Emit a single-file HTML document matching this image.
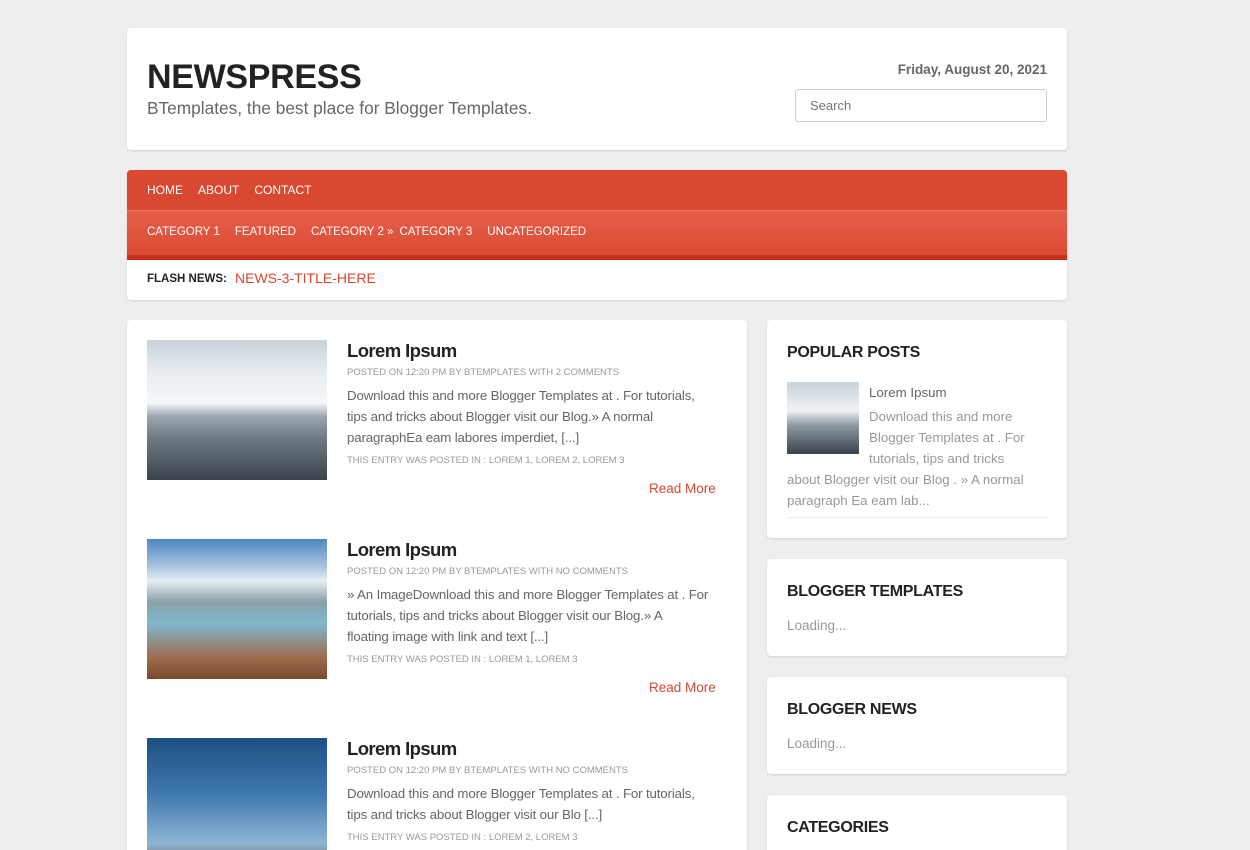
<!DOCTYPE html>
<html style="overflow:hidden;height:850px"><head><style>
*{box-sizing:border-box;margin:0;padding:0}
body{width:1250px;height:850px;overflow:hidden;background:#eee;font-family:"Liberation Sans",sans-serif;color:#555;position:relative}
.box{position:absolute;background:#fff;border-radius:4px;box-shadow:0 1px 2px rgba(0,0,0,.12)}
.a{position:absolute;white-space:nowrap}
.t{font-weight:bold;color:#222;font-size:18.5px;letter-spacing:-.6px}
.meta{font-size:9.5px;color:#999}
.p{font-size:13.3px;line-height:21px;color:#666;letter-spacing:-.15px}
.rm{color:#d9472f;font-size:13.5px}
.ws{font-weight:bold;color:#222;font-size:16px;letter-spacing:-.3px}
.img{position:absolute;width:180px;height:140px}
</style></head><body>
<div class="box" style="left:127px;top:28px;width:940px;height:122px">
 <div class="a" style="left:20px;top:30px;font-size:34px;font-weight:bold;color:#222;letter-spacing:-.3px">NEWSPRESS</div>
 <div class="a" style="left:20px;top:70px;font-size:17.3px;color:#666">BTemplates, the best place for Blogger Templates.</div>
 <div class="a" style="right:20px;top:34px;font-size:13.5px;font-weight:bold;color:#666">Friday, August 20, 2021</div>
 <div class="a" style="left:668px;top:61px;width:252px;height:33px;border:1px solid #ccc;border-radius:3px;font-size:13px;color:#777;padding:8px 14px">Search</div>
</div>
<div class="box" style="left:127px;top:170px;width:940px;height:130px;overflow:hidden">
 <div class="a" style="left:0;top:0;width:940px;height:40px;background:#d9482f;padding:13px 0 0 20px;color:#fff;font-size:12px"><span style="margin-right:15px">HOME</span><span style="margin-right:15px">ABOUT</span><span>CONTACT</span></div>
 <div class="a" style="left:0;top:40px;width:940px;height:50px;background:linear-gradient(#e55f4b,#dc4a32);border-top:1px solid #ec7a67;border-bottom:5px solid #c9301a;padding:15px 0 0 20px;color:#fff;font-size:11.5px"><span style="margin-right:15px">CATEGORY 1</span><span style="margin-right:15px">FEATURED</span><span style="margin-right:6px">CATEGORY 2 »</span><span style="margin-right:15px">CATEGORY 3</span><span>UNCATEGORIZED</span></div>
 <div class="a" style="left:20px;top:103px;font-size:11.5px;font-weight:bold;color:#222">FLASH NEWS:</div>
 <div class="a" style="left:108px;top:100px;font-size:14px;color:#d9472f">NEWS-3-TITLE-HERE</div>
</div>
<div class="box" style="left:127px;top:320px;width:620px;height:560px">
 <div class="img" style="left:20px;top:20px;background:linear-gradient(#c9d3dc 0%,#e9eef2 25%,#f5f7f8 45%,#9aa5ae 55%,#6f7a84 70%,#3a434b 100%)"></div>
 <div class="a t" style="left:220px;top:20px">Lorem Ipsum</div>
 <div class="a meta" style="left:220px;top:47px">POSTED ON 12:20 PM BY BTEMPLATES WITH 2 COMMENTS</div>
 <div class="a p" style="left:220px;top:65px">Download this and more Blogger Templates at . For tutorials,<br>tips and tricks about Blogger visit our Blog.» A normal<br>paragraphEa eam labores imperdiet, [...]</div>
 <div class="a meta" style="left:220px;top:135px">THIS ENTRY WAS POSTED IN : LOREM 1, LOREM 2, LOREM 3</div>
 <div class="a rm" style="left:522px;top:161px">Read More</div>

 <div class="img" style="left:20px;top:219px;background:linear-gradient(#4f86c0 0%,#a9c6e0 20%,#e5eef3 30%,#8aa0a8 45%,#7fb8cf 60%,#9c6c4c 85%,#7a4a2e 100%)"></div>
 <div class="a t" style="left:220px;top:219px">Lorem Ipsum</div>
 <div class="a meta" style="left:220px;top:246px">POSTED ON 12:20 PM BY BTEMPLATES WITH NO COMMENTS</div>
 <div class="a p" style="left:220px;top:264px">» An ImageDownload this and more Blogger Templates at . For<br>tutorials, tips and tricks about Blogger visit our Blog.» A<br>floating image with link and text [...]</div>
 <div class="a meta" style="left:220px;top:334px">THIS ENTRY WAS POSTED IN : LOREM 1, LOREM 3</div>
 <div class="a rm" style="left:522px;top:360px">Read More</div>

 <div class="img" style="left:20px;top:418px;background:linear-gradient(#1d4f82 0%,#3f79ad 40%,#8db4d3 75%,#7f8c97 85%,#2c3a2a 100%)"></div>
 <div class="a t" style="left:220px;top:418px">Lorem Ipsum</div>
 <div class="a meta" style="left:220px;top:445px">POSTED ON 12:20 PM BY BTEMPLATES WITH NO COMMENTS</div>
 <div class="a p" style="left:220px;top:463px">Download this and more Blogger Templates at . For tutorials,<br>tips and tricks about Blogger visit our Blo [...]</div>
 <div class="a meta" style="left:220px;top:512px">THIS ENTRY WAS POSTED IN : LOREM 2, LOREM 3</div>
</div>
<div class="box" style="left:767px;top:320px;width:300px;height:218px">
 <div class="a ws" style="left:20px;top:24px">POPULAR POSTS</div>
 <div class="a" style="left:20px;top:62px;width:72px;height:72px;background:linear-gradient(#c9d3dc,#eef2f4 40%,#8e99a2 60%,#3a434b)"></div>
 <div class="a" style="left:102px;top:65px;font-size:13.3px;color:#666">Lorem Ipsum</div>
 <div class="a" style="left:102px;top:86px;font-size:13.3px;line-height:21px;color:#999">Download this and more<br>Blogger Templates at . For<br>tutorials, tips and tricks</div>
 <div class="a" style="left:20px;top:149px;font-size:13.3px;line-height:21px;color:#999">about Blogger visit our Blog . » A normal<br>paragraph Ea eam lab...</div>
 <div class="a" style="left:20px;top:197px;width:260px;border-top:1px solid #eee"></div>
</div>
<div class="box" style="left:767px;top:559px;width:300px;height:97px">
 <div class="a ws" style="left:20px;top:24px">BLOGGER TEMPLATES</div>
 <div class="a" style="left:20px;top:59px;font-size:13.5px;color:#999">Loading...</div>
</div>
<div class="box" style="left:767px;top:677px;width:300px;height:97px">
 <div class="a ws" style="left:20px;top:24px">BLOGGER NEWS</div>
 <div class="a" style="left:20px;top:59px;font-size:13.5px;color:#999">Loading...</div>
</div>
<div class="box" style="left:767px;top:795px;width:300px;height:97px">
 <div class="a ws" style="left:20px;top:24px">CATEGORIES</div>
</div>
</body></html>
